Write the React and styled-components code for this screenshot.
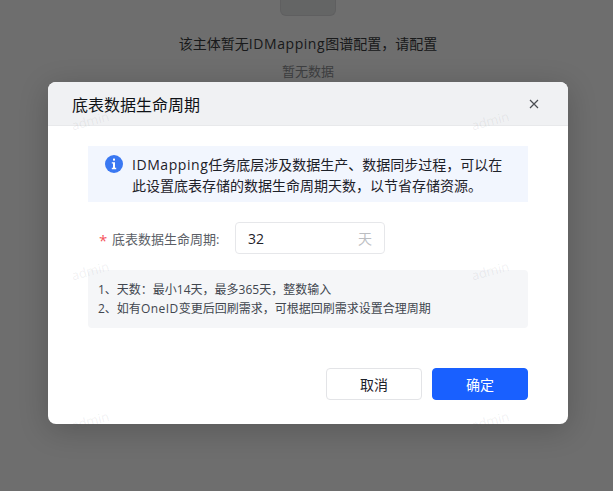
import React from "react";
import styled, { createGlobalStyle } from "styled-components";

const GlobalStyle = createGlobalStyle`
  html, body {
    margin: 0;
    height: 100%;
    background: #fff;
    overflow: hidden;
  }
  body {
    font-family: "Open Sans", "Noto Sans CJK SC", sans-serif;
    color: #1f2329;
  }
`;

const Page = styled.div`
  position: relative;
  width: 613px;
  height: 491px;
  overflow: hidden;
`;

const EmptyState = styled.div`
  display: flex;
  flex-direction: column;
  align-items: center;
  padding-left: 3px;
`;

const EmptyImage = styled.div`
  width: 54px;
  height: 15px;
  background: #e8e9ea;
  border: 1px solid #dcdddf;
  border-top: none;
  border-radius: 0 0 6px 6px;
`;

const EmptyTitle = styled.div`
  margin-top: 18px;
  font-size: 14px;
  line-height: 20px;
  color: #3a3c40;
`;

const EmptyHint = styled.div`
  margin-top: 7px;
  font-size: 13px;
  line-height: 20px;
  color: #909296;
`;

const Latin = styled.span`
  letter-spacing: 0.04em;
`;

const Mask = styled.div`
  position: absolute;
  inset: 0;
  background: rgba(0, 0, 0, 0.57);
  padding: 82px 0 0 48px;
`;

const Dialog = styled.div`
  width: 520px;
  height: 342px;
  display: flex;
  flex-direction: column;
  background: #fff;
  border-radius: 8px;
  overflow: hidden;
  box-shadow: 0 6px 30px rgba(0, 0, 0, 0.2);
`;

const DialogHeader = styled.div`
  height: 43px;
  flex: none;
  display: flex;
  align-items: center;
  justify-content: space-between;
  padding: 0 28px 0 24px;
  background: #f0f1f3;
  border-bottom: 1px solid #e8e9eb;
`;

const DialogTitle = styled.div`
  font-size: 16px;
  color: #0f1216;
`;

const CloseButton = styled.svg`
  width: 12px;
  height: 12px;
  color: #4a4d52;
`;

const DialogBody = styled.div`
  flex: 1;
  padding: 20px 40px 24px;
  display: flex;
  flex-direction: column;
`;

const Notice = styled.div`
  display: flex;
  gap: 9px;
  padding: 8px 17px;
  height: 56px;
  box-sizing: border-box;
  background: #f2f6fe;
`;

const NoticeText = styled.div`
  font-size: 14px;
  line-height: 21px;
  width: 376px;
  color: #1d2129;
`;

const NoticeIcon = styled.svg`
  width: 18px;
  height: 18px;
  flex: none;
  margin-top: 1px;
`;

const FormRow = styled.div`
  display: flex;
  align-items: center;
  margin-top: 20px;
  height: 32px;
  padding-left: 11px;
`;

const Star = styled.span`
  width: 13px;
  font-size: 15px;
  line-height: 20px;
  padding-top: 3px;
  color: #f5535a;
`;

const FieldLabel = styled.label`
  width: 123px;
  font-size: 13px;
  color: #5a5e66;
`;

const InputBox = styled.div`
  width: 150px;
  height: 32px;
  box-sizing: border-box;
  display: flex;
  align-items: center;
  justify-content: space-between;
  padding: 0 12px;
  border: 1px solid #e6e7ea;
  border-radius: 4px;
  font-size: 14px;
`;

const Unit = styled.span`
  color: #bcbec2;
`;

const Tips = styled.div`
  margin-top: 16px;
  height: 58px;
  box-sizing: border-box;
  padding: 10px;
  background: #f5f6f8;
  border-radius: 4px;
  font-size: 12px;
  line-height: 19px;
  color: #41464f;
`;

const Footer = styled.div`
  margin-top: auto;
  display: flex;
  justify-content: flex-end;
  gap: 10px;
`;

const Button = styled.button`
  width: 96px;
  height: 32px;
  box-sizing: border-box;
  padding: 0;
  font-family: inherit;
  font-size: 14px;
  border-radius: 4px;
  border: 1px solid ${(p) => (p.$primary ? "#1960ff" : "#e3e4e7")};
  background: ${(p) => (p.$primary ? "#1960ff" : "#fff")};
  color: ${(p) => (p.$primary ? "#fff" : "#1d2129")};
`;

const WatermarkLayer = styled.div`
  position: absolute;
  inset: 0;
  padding: 112px 0 0 71px;
  display: grid;
  grid-template-columns: repeat(2, 400px);
  grid-auto-rows: 150px;
  pointer-events: none;
`;

const Watermark = styled.span`
  font-size: 13px;
  line-height: 18px;
  height: 18px;
  width: 36px;
  color: rgba(80, 85, 95, 0.09);
  transform: rotate(-15deg);
`;

const watermarks = Array.from({ length: 6 });

export default function App() {
  return (
    <Page>
      <GlobalStyle />
      <EmptyState>
        <EmptyImage />
        <EmptyTitle>
          该主体暂无<Latin>IDMapping</Latin>图谱配置，请配置
        </EmptyTitle>
        <EmptyHint>暂无数据</EmptyHint>
      </EmptyState>
      <Mask>
        <Dialog>
          <DialogHeader>
            <DialogTitle>底表数据生命周期</DialogTitle>
            <CloseButton viewBox="0 0 12 12" fill="none">
              <path
                d="M2 2l8 8M10 2l-8 8"
                stroke="currentColor"
                strokeWidth="1.2"
              />
            </CloseButton>
          </DialogHeader>
          <DialogBody>
            <Notice>
              <NoticeIcon viewBox="0 0 18 18">
                <circle cx="9" cy="9" r="9" fill="#3a78f2" />
                <rect x="8" y="3.6" width="2" height="2" fill="#fff" />
                <path
                  d="M6.8 7.2h3.2v5.6h1.2v1.4H6.8v-1.4H8V8.6H6.8z"
                  fill="#fff"
                />
              </NoticeIcon>
              <NoticeText>
                <Latin>IDMapping</Latin>
                任务底层涉及数据生产、数据同步过程，可以在此设置底表存储的数据生命周期天数，以节省存储资源。
              </NoticeText>
            </Notice>
            <FormRow>
              <Star>*</Star>
              <FieldLabel>底表数据生命周期:</FieldLabel>
              <InputBox>
                <span>32</span>
                <Unit>天</Unit>
              </InputBox>
            </FormRow>
            <Tips>
              <div>1、天数：最小14天，最多365天，整数输入</div>
              <div>
                2、如有<Latin>OneID</Latin>
                变更后回刷需求，可根据回刷需求设置合理周期
              </div>
            </Tips>
            <Footer>
              <Button>取消</Button>
              <Button $primary>确定</Button>
            </Footer>
          </DialogBody>
        </Dialog>
      </Mask>
      <WatermarkLayer>
        {watermarks.map((_, i) => (
          <Watermark key={i}>admin</Watermark>
        ))}
      </WatermarkLayer>
    </Page>
  );
}
